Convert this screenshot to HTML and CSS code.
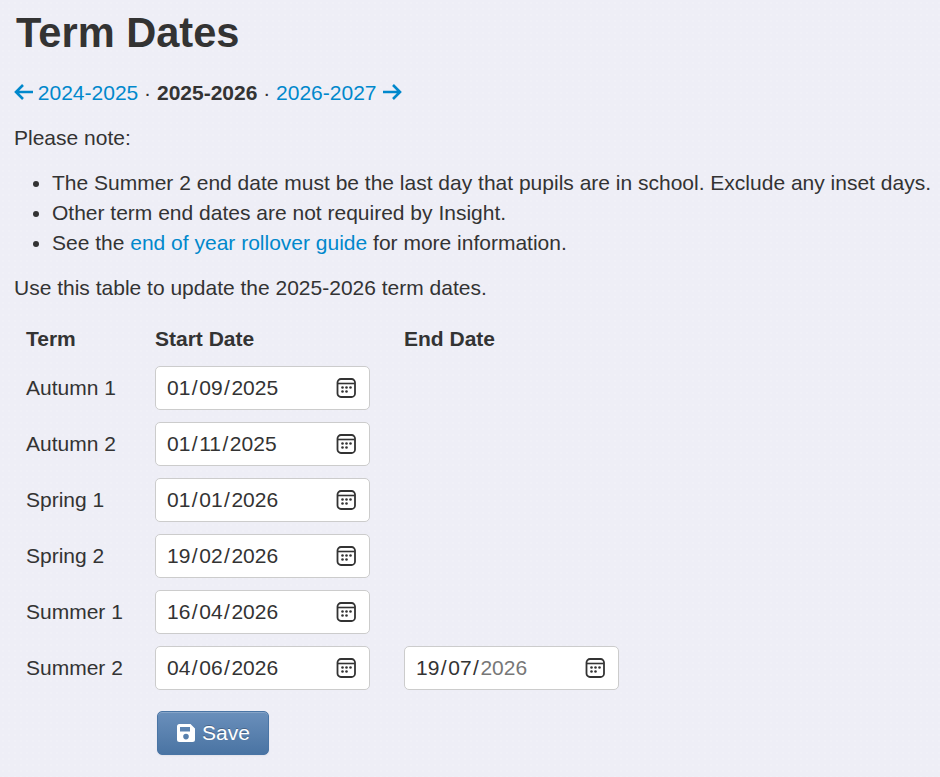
FILE: index.html
```html
<!DOCTYPE html>
<html lang="en">
<head>
  <meta charset="UTF-8">
  <title>Term Dates</title>
  <link rel="stylesheet" href="styles.css">
</head>
<body>
  <svg class="defs" width="0" height="0">
    <symbol id="cal" viewBox="0 0 20 20">
      <rect x="1.5" y="1" width="17.500" height="18" rx="3.500" fill="none" stroke="#333" stroke-width="1.800"/>
      <path d="M2 5.500h16.500" stroke="#333" stroke-width="1.600"/>
      <g fill="#333">
        <circle cx="6.500" cy="9.500" r="1.300"/><circle cx="10.500" cy="9.500" r="1.300"/><circle cx="14.500" cy="9.500" r="1.300"/>
        <circle cx="6.500" cy="13.500" r="1.300"/><circle cx="10.500" cy="13.500" r="1.300"/>
      </g>
    </symbol>
  </svg>

  <h1>Term Dates</h1>

  <p class="year-nav">
    <a href="#"><svg class="arrow arrow-left" viewBox="0 0 20 18"><path d="M9 2 2 9l7 7M2.500 9H19" fill="none" stroke="currentColor" stroke-width="2.600"/></svg> 2024-2025</a>
    <span class="dot">·</span>
    <strong>2025-2026</strong>
    <span class="dot">·</span>
    <a href="#">2026-2027 <svg class="arrow" viewBox="0 0 20 18"><path d="m11 2 7 7-7 7M17.500 9H1" fill="none" stroke="currentColor" stroke-width="2.600"/></svg></a>
  </p>

  <p>Please note:</p>
  <ul>
    <li>The Summer 2 end date must be the last day that pupils are in school. Exclude any inset days.</li>
    <li>Other term end dates are not required by Insight.</li>
    <li>See the <a href="#">end of year rollover guide</a> for more information.</li>
  </ul>
  <p>Use this table to update the 2025-2026 term dates.</p>

  <table class="terms">
    <thead>
      <tr><th class="term-col">Term</th><th class="date-col">Start Date</th><th>End Date</th></tr>
    </thead>
    <tbody>
      <tr>
        <td>Autumn 1</td>
        <td><div class="date-input"><span>01<i>/</i>09<i>/</i>2025</span><svg class="cal"><use href="#cal"/></svg></div></td>
        <td></td>
      </tr>
      <tr>
        <td>Autumn 2</td>
        <td><div class="date-input"><span>01<i>/</i>11<i>/</i>2025</span><svg class="cal"><use href="#cal"/></svg></div></td>
        <td></td>
      </tr>
      <tr>
        <td>Spring 1</td>
        <td><div class="date-input"><span>01<i>/</i>01<i>/</i>2026</span><svg class="cal"><use href="#cal"/></svg></div></td>
        <td></td>
      </tr>
      <tr>
        <td>Spring 2</td>
        <td><div class="date-input"><span>19<i>/</i>02<i>/</i>2026</span><svg class="cal"><use href="#cal"/></svg></div></td>
        <td></td>
      </tr>
      <tr>
        <td>Summer 1</td>
        <td><div class="date-input"><span>16<i>/</i>04<i>/</i>2026</span><svg class="cal"><use href="#cal"/></svg></div></td>
        <td></td>
      </tr>
      <tr>
        <td>Summer 2</td>
        <td><div class="date-input"><span>04<i>/</i>06<i>/</i>2026</span><svg class="cal"><use href="#cal"/></svg></div></td>
        <td><div class="date-input"><span>19<i>/</i>07<i>/</i><span class="muted">2026</span></span><svg class="cal"><use href="#cal"/></svg></div></td>
      </tr>
    </tbody>
  </table>

  <button class="save" type="button">
    <svg class="save-icon" viewBox="0 0 20 20"><path fill-rule="evenodd" d="M3.500 1h11L19 5.500V16.500a2.500 2.500 0 0 1-2.500 2.500h-13A2.500 2.500 0 0 1 1 16.500v-13A2.500 2.500 0 0 1 3.500 1Zm.5 3v4.500h10V4ZM10 10.800a2.800 2.800 0 1 0 0 5.600 2.800 2.800 0 0 0 0-5.600Z" fill="#fff"/></svg>
    Save
  </button>
</body>
</html>
```

FILE: styles.css
```css
* {
  box-sizing: border-box;
}

body {
  margin: 0;
  padding: 0 0 0 14px;
  height: 777px;
  overflow: hidden;
  font-family: "Liberation Sans", Arial, sans-serif;
  font-size: 21px;
  line-height: 30px;
  color: #333;
  background: #eeeef6;
  background-image: radial-gradient(rgba(255, 255, 255, 0.1) 1px, transparent 1.5px);
  background-size: 6px 6px;
}

.defs {
  position: absolute;
}

h1 {
  margin: 0 0 22px 2px;
  padding-top: 9px;
  font-size: 41.6px;
  line-height: 47px;
  font-weight: bold;
}

p {
  margin: 0 0 15px;
}

a {
  color: #0088cc;
  text-decoration: none;
}

.arrow {
  width: 20px;
  height: 18px;
  vertical-align: -1px;
}

.arrow-left {
  margin-right: -2px;
}

ul {
  margin: 0 0 15px;
  padding-left: 38px;
  white-space: nowrap;
}

.terms {
  border-collapse: collapse;
  margin-top: 15px;
}

.terms th {
  height: 42px;
  padding: 0 12px;
  text-align: left;
  font-weight: bold;
}

.terms td {
  height: 56px;
  padding: 0 12px;
}

.terms .term-col {
  width: 141px;
}

.terms th + th,
.terms td + td {
  padding-left: 0;
}

.terms .date-col {
  width: 249px;
}

.date-input {
  display: flex;
  align-items: center;
  justify-content: space-between;
  width: 215px;
  height: 44px;
  padding: 0 13px 0 11px;
  background: #fff;
  border: 1px solid #ccc;
  border-radius: 5px;
  line-height: 42px;
}

.date-input i {
  margin: 0 1.5px;
  font-style: normal;
}

.muted {
  color: #777;
}

.cal {
  width: 20px;
  height: 20px;
}

.save {
  display: flex;
  align-items: center;
  gap: 6px;
  width: 112px;
  height: 44px;
  margin: 15px 0 0 143px;
  padding: 0 0 0 18px;
  font: 21px/30px "Liberation Sans", Arial, sans-serif;
  color: #fff;
  text-shadow: 0 -1px 0 rgba(0, 0, 0, 0.25);
  background: linear-gradient(#6a8fbb, #4a74a3);
  border: 1px solid #4a75a5;
  border-radius: 5px;
  box-shadow: inset 0 1px 0 rgba(255, 255, 255, 0.2), 0 1px 2px rgba(0, 0, 0, 0.05);
}

.save-icon {
  width: 20px;
  height: 20px;
}
```
